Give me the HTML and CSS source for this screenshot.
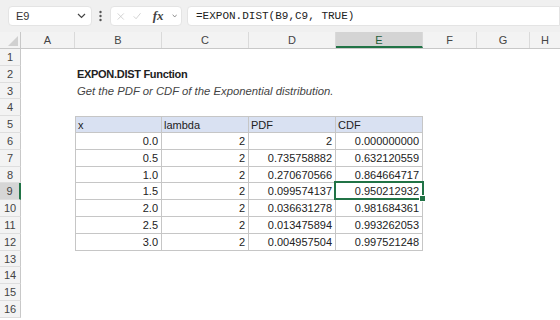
FILE: index.html
```html
<!DOCTYPE html>
<html lang="en">
<head>
    <meta charset="utf8"/>
    <title>EXPON.DIST</title>
    <link rel="stylesheet" href="styles.css">
</head>
<body>
<div class="topbar">
    <div class="namebox">
        <span>E9</span>
        <svg class="chev" width="9" height="6" viewBox="0 0 9 6"><path d="M1 1 L4.5 4.5 L8 1" fill="none" stroke="#444" stroke-width="1.2"/></svg>
    </div>
    <svg class="grip" width="3" height="12" viewBox="0 0 3 12"><circle cx="1.5" cy="2" r="1.2" fill="#555"/><circle cx="1.5" cy="6" r="1.2" fill="#555"/><circle cx="1.5" cy="10" r="1.2" fill="#555"/></svg>
    <div class="fxbox">
        <svg width="11" height="11" viewBox="0 0 11 11"><path d="M1 1 L10 10 M10 1 L1 10" stroke="#c4c4c4" stroke-width="1.1"/></svg>
        <svg width="12" height="10" viewBox="0 0 12 10"><path d="M1 5.5 L4.5 9 L11 1" fill="none" stroke="#c4c4c4" stroke-width="1.1"/></svg>
        <span class="fx">fx</span>
        <svg class="chev" width="8" height="6" viewBox="0 0 8 6"><path d="M1 1 L4 4.5 L7 1" fill="none" stroke="#666" stroke-width="1"/></svg>
    </div>
    <div class="formula">=EXPON.DIST(B9,C9, TRUE)</div>
</div>

<div class="sheet">
    <div class="row head">
        <div class="rh corner"><svg width="10" height="10" viewBox="0 0 10 10"><path d="M10 0 L10 10 L0 10 Z" fill="#d0d0d0"/></svg></div>
        <div class="ch a">A</div>
        <div class="ch b">B</div>
        <div class="ch c">C</div>
        <div class="ch d">D</div>
        <div class="ch e sel">E</div>
        <div class="ch f">F</div>
        <div class="ch g">G</div>
        <div class="ch h">H</div>
    </div>
    <div class="row"><div class="rh">1</div></div>
    <div class="row"><div class="rh">2</div><div class="cell a"></div><div class="cell b title">EXPON.DIST Function</div></div>
    <div class="row"><div class="rh">3</div><div class="cell a"></div><div class="cell b sub">Get the PDF or CDF of the Exponential distribution.</div></div>
    <div class="row"><div class="rh">4</div></div>
    <div class="row"><div class="rh">5</div><div class="cell a"></div>
        <div class="cell b t th first">x</div><div class="cell c t th">lambda</div><div class="cell d t th">PDF</div><div class="cell e t th">CDF</div></div>
    <div class="row"><div class="rh">6</div><div class="cell a"></div>
        <div class="cell b t first num">0.0</div><div class="cell c t num">2</div><div class="cell d t num">2</div><div class="cell e t num">0.000000000</div></div>
    <div class="row"><div class="rh">7</div><div class="cell a"></div>
        <div class="cell b t first num">0.5</div><div class="cell c t num">2</div><div class="cell d t num">0.735758882</div><div class="cell e t num">0.632120559</div></div>
    <div class="row"><div class="rh">8</div><div class="cell a"></div>
        <div class="cell b t first num">1.0</div><div class="cell c t num">2</div><div class="cell d t num">0.270670566</div><div class="cell e t num">0.864664717</div></div>
    <div class="row"><div class="rh active">9</div><div class="cell a"></div>
        <div class="cell b t first num">1.5</div><div class="cell c t num">2</div><div class="cell d t num">0.099574137</div><div class="cell e t num selected">0.950212932</div></div>
    <div class="row"><div class="rh">10</div><div class="cell a"></div>
        <div class="cell b t first num">2.0</div><div class="cell c t num">2</div><div class="cell d t num">0.036631278</div><div class="cell e t num">0.981684361</div></div>
    <div class="row"><div class="rh">11</div><div class="cell a"></div>
        <div class="cell b t first num">2.5</div><div class="cell c t num">2</div><div class="cell d t num">0.013475894</div><div class="cell e t num">0.993262053</div></div>
    <div class="row"><div class="rh">12</div><div class="cell a"></div>
        <div class="cell b t first num">3.0</div><div class="cell c t num">2</div><div class="cell d t num">0.004957504</div><div class="cell e t num">0.997521248</div></div>
    <div class="row"><div class="rh">13</div></div>
    <div class="row"><div class="rh">14</div></div>
    <div class="row"><div class="rh">15</div></div>
    <div class="row"><div class="rh">16</div></div>
</div>
</body>
</html>
```

FILE: styles.css
```css
body {
    margin: 0;
    font-family: "Liberation Sans", Arial, sans-serif;
    font-size: 11px;
    color: #222;
    background: #fff;
    overflow: hidden;
}

.topbar {
    display: flex;
    align-items: center;
    height: 32px;
    padding: 0 0 0 8px;
    background: #f0f0f0;
    box-sizing: border-box;
}

.namebox, .fxbox, .formula {
    height: 20px;
    background: #fff;
    border: 1px solid #e4e4e4;
    border-radius: 4px;
    box-sizing: border-box;
    display: flex;
    align-items: center;
}

.namebox {
    width: 84px;
    padding: 0 5px 0 7px;
    justify-content: space-between;
    color: #333;
}

.grip {
    margin: 0 8px 0 7px;
}

.fxbox {
    width: 72px;
    padding: 0 4px 0 6px;
    gap: 8px;
}

.fx {
    font-family: "Liberation Serif", serif;
    font-style: italic;
    font-weight: bold;
    font-size: 13px;
    color: #444;
    margin-left: 4px;
}

.formula {
    flex: 1;
    margin-left: 5px;
    padding-left: 8px;
    border-radius: 4px 0 0 4px;
    font-family: "Liberation Mono", "DejaVu Sans Mono", monospace;
    font-size: 11px;
    color: #222;
}

.sheet {
    display: flex;
    flex-direction: column;
}

.row {
    display: flex;
    height: 16.8px;
}

.row.head {
    height: 17px;
    background: #f3f3f3;
    border-bottom: 1px solid #c8c8c8;
    box-sizing: border-box;
}

.rh {
    width: 21px;
    flex: none;
    background: #f3f3f3;
    border-right: 1px solid #c8c8c8;
    border-bottom: 1px solid #dedede;
    box-sizing: border-box;
    text-align: center;
    color: #444;
    line-height: 16px;
}

.rh.corner {
    border-bottom: none;
    display: flex;
    align-items: flex-end;
    justify-content: flex-end;
    padding: 0 2px 2px 0;
}

.rh.active {
    background: #d6d6d6;
    border-right: 2px solid #217346;
}

.ch {
    flex: none;
    text-align: center;
    color: #444;
    line-height: 16px;
    border-right: 1px solid #dadada;
    box-sizing: border-box;
}

.ch.sel {
    background: #d4d4d4;
    border-bottom: 2px solid #217346;
    color: #1e5c38;
}

.a { width: 54px; }
.b, .c, .d, .e { width: 87px; }
.f { width: 54px; }
.g { width: 53px; }
.h { flex: 1; border-right: none; }

.cell {
    flex: none;
    box-sizing: border-box;
    line-height: 17px;
    padding: 0 3px 0 2px;
    white-space: nowrap;
}

.title {
    font-weight: bold;
    letter-spacing: -0.3px;
    overflow: visible;
}

.sub {
    font-style: italic;
    font-size: 11.3px;
    color: #444;
}

.t {
    line-height: 16px;
    border-right: 1px solid #c6c6c6;
    border-bottom: 1px solid #c6c6c6;
}

.t.first {
    border-left: 1px solid #c6c6c6;
}

.th {
    background: #d9e1f2;
    border-top: 1px solid #c6c6c6;
}

.num {
    text-align: right;
}

.selected {
    position: relative;
}

.selected::after {
    content: "";
    position: absolute;
    left: -2px;
    top: -2px;
    right: -2px;
    bottom: -1px;
    border: 2px solid #217346;
}

.selected::before {
    content: "";
    position: absolute;
    right: -4px;
    bottom: -3px;
    width: 5px;
    height: 5px;
    background: #217346;
    border: 1px solid #fff;
    z-index: 1;
}
```
